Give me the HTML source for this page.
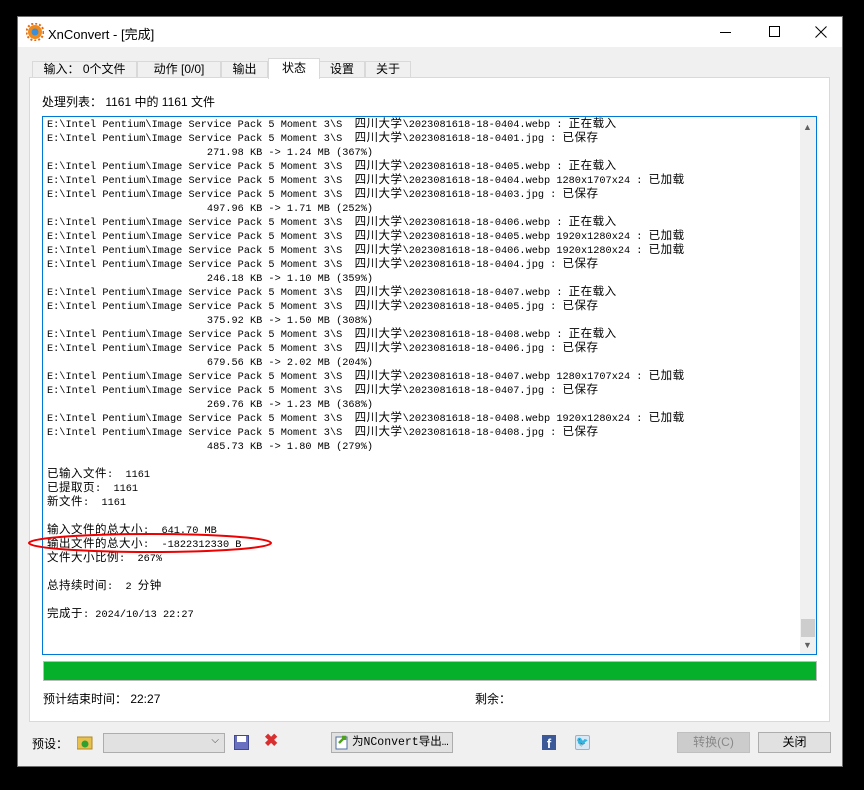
<!DOCTYPE html>
<html><head><meta charset="utf-8"><style>
*{margin:0;padding:0;box-sizing:border-box}
body{width:864px;height:790px;background:#000;position:relative;overflow:hidden;font-family:"Liberation Sans","Noto Sans CJK SC",sans-serif;font-size:12px;color:#000}
.abs{position:absolute}
#win{left:17px;top:16px;width:826px;height:751px;background:#f0f0f0;border:1px solid #6e6e6e}
#title{left:0;top:0;width:824px;height:30px;background:#fff}
.tab{position:absolute;top:44px;height:17px;border:1px solid #d9d9d9;border-bottom:none;background:#f0f0f0;font-size:12px;line-height:15px;text-align:center}
#panel{left:11px;top:60px;width:801px;height:645px;background:#fff;border:1px solid #d9d9d9}
#log{left:24px;top:99px;width:775px;height:539px;border:1px solid #0078d7;background:#fff;overflow:hidden}
#lines{position:absolute;left:4px;top:1px;font-family:"Liberation Mono","Noto Sans CJK SC",monospace;font-size:10.25px}
#lines div{height:14px;line-height:14px;white-space:pre;overflow:visible}
#lines b{font-weight:normal;font-family:"Noto Sans CJK SC",sans-serif;font-size:11.5px;letter-spacing:.5px;line-height:0}
.btn{position:absolute;height:21px;border:1px solid #adadad;background:#e1e1e1;font-size:12px;line-height:19px;text-align:center}
</style></head><body>
<div id="win" class="abs">
 <div id="title" class="abs">
  <svg class="abs" style="left:8px;top:6px" width="18" height="18" viewBox="0 0 18 18"><circle cx="9" cy="9" r="7" fill="#f08a1c"/><circle cx="9" cy="9" r="8.5" fill="none" stroke="#e06a10" stroke-width="2" stroke-dasharray="2 2"/><circle cx="9" cy="9" r="3.5" fill="#3a8fd8"/></svg>
  <div class="abs" style="left:30px;top:7px;font-size:13px">XnConvert - [完成]</div>
  <div class="abs" style="left:702px;top:15px;width:11px;height:1px;background:#000"></div>
  <div class="abs" style="left:751px;top:9px;width:11px;height:11px;border:1px solid #000"></div>
  <svg class="abs" style="left:797px;top:9px" width="12" height="12"><path d="M0.5 0.5L11.5 11.5M11.5 0.5L0.5 11.5" stroke="#000" stroke-width="1"/></svg>
 </div>
 <div class="tab" style="left:14px;width:105px">输入： 0个文件</div>
 <div class="tab" style="left:119px;width:84px">动作 [0/0]</div>
 <div class="tab" style="left:203px;width:47px">输出</div>
 <div class="tab" style="left:250px;width:52px;top:41px;height:21px;background:#fff;z-index:2;line-height:18px">状态</div>
 <div class="tab" style="left:301px;width:46px">设置</div>
 <div class="tab" style="left:347px;width:46px">关于</div>
 <div id="panel" class="abs"></div>
 <div class="abs" style="left:24px;top:76px">处理列表： 1161 中的 1161 文件</div>
 <div id="log" class="abs">
<div id="lines">
<div>E:\Intel Pentium\Image Service Pack 5 Moment 3\S  <b>四川大学</b>\2023081618-18-0404.webp : <b>正在载入</b></div>
<div>E:\Intel Pentium\Image Service Pack 5 Moment 3\S  <b>四川大学</b>\2023081618-18-0401.jpg : <b>已保存</b></div>
<div>                          271.98 KB -> 1.24 MB (367%)</div>
<div>E:\Intel Pentium\Image Service Pack 5 Moment 3\S  <b>四川大学</b>\2023081618-18-0405.webp : <b>正在载入</b></div>
<div>E:\Intel Pentium\Image Service Pack 5 Moment 3\S  <b>四川大学</b>\2023081618-18-0404.webp 1280x1707x24 : <b>已加载</b></div>
<div>E:\Intel Pentium\Image Service Pack 5 Moment 3\S  <b>四川大学</b>\2023081618-18-0403.jpg : <b>已保存</b></div>
<div>                          497.96 KB -> 1.71 MB (252%)</div>
<div>E:\Intel Pentium\Image Service Pack 5 Moment 3\S  <b>四川大学</b>\2023081618-18-0406.webp : <b>正在载入</b></div>
<div>E:\Intel Pentium\Image Service Pack 5 Moment 3\S  <b>四川大学</b>\2023081618-18-0405.webp 1920x1280x24 : <b>已加载</b></div>
<div>E:\Intel Pentium\Image Service Pack 5 Moment 3\S  <b>四川大学</b>\2023081618-18-0406.webp 1920x1280x24 : <b>已加载</b></div>
<div>E:\Intel Pentium\Image Service Pack 5 Moment 3\S  <b>四川大学</b>\2023081618-18-0404.jpg : <b>已保存</b></div>
<div>                          246.18 KB -> 1.10 MB (359%)</div>
<div>E:\Intel Pentium\Image Service Pack 5 Moment 3\S  <b>四川大学</b>\2023081618-18-0407.webp : <b>正在载入</b></div>
<div>E:\Intel Pentium\Image Service Pack 5 Moment 3\S  <b>四川大学</b>\2023081618-18-0405.jpg : <b>已保存</b></div>
<div>                          375.92 KB -> 1.50 MB (308%)</div>
<div>E:\Intel Pentium\Image Service Pack 5 Moment 3\S  <b>四川大学</b>\2023081618-18-0408.webp : <b>正在载入</b></div>
<div>E:\Intel Pentium\Image Service Pack 5 Moment 3\S  <b>四川大学</b>\2023081618-18-0406.jpg : <b>已保存</b></div>
<div>                          679.56 KB -> 2.02 MB (204%)</div>
<div>E:\Intel Pentium\Image Service Pack 5 Moment 3\S  <b>四川大学</b>\2023081618-18-0407.webp 1280x1707x24 : <b>已加载</b></div>
<div>E:\Intel Pentium\Image Service Pack 5 Moment 3\S  <b>四川大学</b>\2023081618-18-0407.jpg : <b>已保存</b></div>
<div>                          269.76 KB -> 1.23 MB (368%)</div>
<div>E:\Intel Pentium\Image Service Pack 5 Moment 3\S  <b>四川大学</b>\2023081618-18-0408.webp 1920x1280x24 : <b>已加载</b></div>
<div>E:\Intel Pentium\Image Service Pack 5 Moment 3\S  <b>四川大学</b>\2023081618-18-0408.jpg : <b>已保存</b></div>
<div>                          485.73 KB -> 1.80 MB (279%)</div>
<div> </div>
<div><b>已输入文件</b>:  1161</div>
<div><b>已提取页</b>:  1161</div>
<div><b>新文件</b>:  1161</div>
<div> </div>
<div><b>输入文件的总大小</b>:  641.70 MB</div>
<div><b>输出文件的总大小</b>:  -1822312330 B</div>
<div><b>文件大小比例</b>:  267%</div>
<div> </div>
<div><b>总持续时间</b>:  2 <b>分钟</b></div>
<div> </div>
<div><b>完成于</b>: 2024/10/13 22:27</div>
</div>
  <div class="abs" style="left:757px;top:0;width:16px;height:537px;background:#f0f0f0"></div>
  <div class="abs" style="left:760px;top:5px;font-size:9px;color:#606060">▲</div>
  <div class="abs" style="left:758px;top:502px;width:14px;height:18px;background:#cdcdcd"></div>
  <div class="abs" style="left:760px;top:523px;font-size:9px;color:#606060">▼</div>
 </div>
 <svg class="abs" style="left:8px;top:514px" width="250" height="24"><ellipse cx="124" cy="12" rx="121" ry="9" fill="none" stroke="#e00" stroke-width="2"/></svg>
 <div class="abs" style="left:25px;top:644px;width:774px;height:20px;background:#07b02a;border:1px solid #bcbcbc"></div>
 <div class="abs" style="left:25px;top:673px">预计结束时间： 22:27</div>
 <div class="abs" style="left:457px;top:673px">剩余：</div>
 <div class="abs" style="left:14px;top:718px">预设：</div>
 <svg class="abs" style="left:59px;top:718px" width="16" height="15"><rect x="0" y="2" width="15" height="12" fill="#e8c050" stroke="#b08820"/><circle cx="8" cy="9" r="3.5" fill="#30a030"/></svg>
 <div class="abs" style="left:85px;top:716px;width:122px;height:20px;border:1px solid #adadad;background:#e1e1e1"><span class="abs" style="right:5px;top:1px;font-size:10px;color:#444">⌵</span></div>
 <svg class="abs" style="left:216px;top:718px" width="15" height="15"><rect x="0.5" y="0.5" width="14" height="14" fill="#6a70c0" stroke="#404890"/><rect x="3" y="1" width="9" height="6" fill="#fff"/></svg>
 <div class="abs" style="left:246px;top:714px;color:#d83030;font-size:17px;font-weight:bold">✖</div>
 <div class="btn" style="left:313px;top:715px;width:122px;text-align:left;padding-left:20px;font-family:'Liberation Mono','Noto Sans CJK SC',monospace;font-size:11.5px">为NConvert导出…</div>
 <svg class="abs" style="left:317px;top:718px" width="14" height="15"><rect x="1" y="2" width="11" height="12" fill="#fff" stroke="#5070a0"/><path d="M4 8L10 2M7 2H10V5" stroke="#50a020" stroke-width="2.5" fill="none"/></svg>
 <div class="abs" style="left:524px;top:718px;width:14px;height:15px;background:#3b5998;color:#fff;font-weight:bold;font-size:13px;line-height:17px;text-align:center">f</div>
 <div class="abs" style="left:557px;top:718px;width:15px;height:15px;background:#d8e8f4;border:1px solid #aac;border-radius:2px;color:#2a9ae0;font-size:10px;line-height:13px;text-align:center">🐦</div>
 <div class="btn" style="left:659px;top:715px;width:73px;color:#888;background:#cccccc;border-color:#bfbfbf">转换(C)</div>
 <div class="btn" style="left:740px;top:715px;width:73px">关闭</div>
</div>
</body></html>
